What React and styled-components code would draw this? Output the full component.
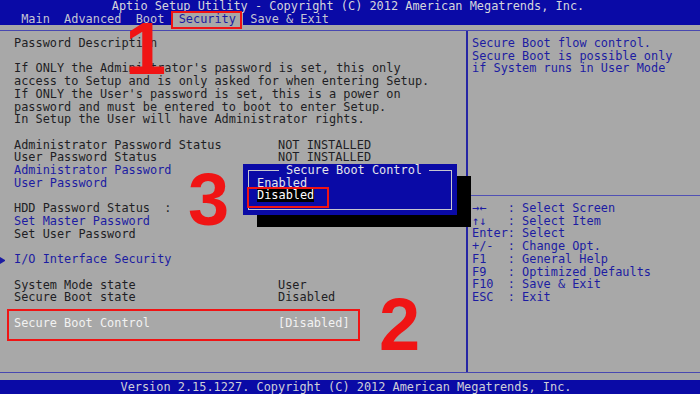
import React from 'react'
import styled, { createGlobalStyle } from 'styled-components'

const BLUE = '#0a0aa6'
const GREY = '#a8a8a8'
const INK = '#1e1e24'
const LINK = '#1c1ca2'
const RED = '#f01414'

const GlobalStyle = createGlobalStyle`
  html, body { margin: 0; padding: 0; background: ${GREY}; }
  * { box-sizing: border-box; }
`

const Screen = styled.div`
  position: relative;
  width: 700px;
  height: 394px;
  overflow: hidden;
  display: flex;
  flex-direction: column;
  background: ${GREY};
  font-family: "DejaVu Sans Mono", "Liberation Mono", monospace;
  font-size: 11.9px;
  line-height: 12.73px;
  color: ${INK};
  white-space: pre;
`

const TopBar = styled.div`
  background: ${BLUE};
  height: 25px;
  color: #d6d6dc;
`

const Title = styled.div`
  text-align: center;
  padding-right: 4px;
`

const Tabs = styled.div`
  display: flex;
  padding-left: 14px;
`

const Tab = styled.span`
  padding: 0 1ch;
  color: ${p => (p.$active ? LINK : '#c4c4d4')};
  background: ${p => (p.$active ? GREY : 'transparent')};
`

const Rule = styled.div`
  height: 6px;
  border-bottom: 1.5px solid #4848b0;
`

const Main = styled.div`
  flex: 1;
  display: flex;
  min-height: 0;
`

const LeftPanel = styled.div`
  width: 466px;
  padding: 6px 0 0 14px;
`

const Divider = styled.div`
  width: 2px;
  background: #2626a4;
`

const RightPanel = styled.div`
  flex: 1;
  display: flex;
  flex-direction: column;
`

const HelpBox = styled.div`
  height: 165px;
  padding: 6px 0 0 4px;
  color: ${LINK};
  border-bottom: 1.5px solid #5050b4;
`

const Legend = styled.div`
  padding: 6px 0 0 4px;
  color: ${LINK};
`

const KeyRow = styled.div`
  display: grid;
  grid-template-columns: 5ch 2ch auto;
`

const Line = styled.div`
  height: 12.73px;
  color: ${p => (p.$tone === 'blue' ? LINK : p.$tone === 'white' ? '#f2f2f2' : INK)};
`

const Row = styled(Line)`
  display: grid;
  grid-template-columns: 264px auto;
`

const SubRow = styled(Line)`
  display: flex;
  align-items: center;
  margin-left: -14px;
`

const Arrow = styled.span`
  width: 14px;
  height: 7px;
  display: inline-block;
  border-left: 5px solid ${LINK};
  border-top: 3.5px solid transparent;
  border-bottom: 3.5px solid transparent;
  margin-top: 1px;
`

const BottomRule = styled.div`
  height: 8px;
  border-top: 1.5px solid #4848b0;
`

const Footer = styled.div`
  height: 14px;
  background: ${BLUE};
  color: #cfcfd8;
  text-align: center;
  line-height: 14px;
  padding-right: 8px;
`

/* popup menu over the page */
const Dialog = styled.div`
  position: absolute;
  left: 243px;
  top: 164px;
  width: 214px;
  height: 51px;
  background: ${BLUE};
  box-shadow: 14px 12px 0 #000;
  padding: 0 5px 5px 5px;
  color: #e4e4ea;
  z-index: 2;
`

const Frame = styled.fieldset`
  margin: 0;
  height: 100%;
  min-inline-size: 0;
  padding: 0 0 6px 8px;
  border: 1px solid #c6c6d0;
  border-radius: 0;
`

const FrameTitle = styled.legend`
  margin: 0 auto;
  padding: 0 1ch;
  line-height: 12.73px;
`

const Option = styled.div`
  height: 12.73px;
`

const Highlight = styled.span`
  background: #000;
  color: #fff;
`

/* red annotations */
const Mark = styled.div`
  position: absolute;
  border: 2px solid ${RED};
  z-index: 3;
`

const Number = styled.div`
  position: absolute;
  font-family: "Liberation Sans", Arial, sans-serif;
  font-weight: 700;
  font-size: 74px;
  line-height: 1;
  color: ${RED};
  z-index: 3;
`

const description = [
  'Password Description',
  '',
  "If ONLY the Administrator's password is set, this only",
  'access to Setup and is only asked for when entering Setup.',
  "If ONLY the User's password is set, this is a power on",
  'password and must be entered to boot to enter Setup.',
  'In Setup the User will have Administrator rights.',
  '',
]

const keys = [
  ['\u2192\u2190', 'Select Screen'],
  ['\u2191\u2193', 'Select Item'],
  ['Enter', 'Select'],
  ['+/-', 'Change Opt.'],
  ['F1', 'General Help'],
  ['F9', 'Optimized Defaults'],
  ['F10', 'Save & Exit'],
  ['ESC', 'Exit'],
]

const tabs = ['Main', 'Advanced', 'Boot', 'Security', 'Save & Exit']

const App = () => {
  return (
    <>
      <GlobalStyle />
      <Screen>
        <TopBar>
          <Title>Aptio Setup Utility - Copyright (C) 2012 American Megatrends, Inc.</Title>
          <Tabs>
            {tabs.map(t => (
              <Tab key={t} $active={t === 'Security'}>{t}</Tab>
            ))}
          </Tabs>
        </TopBar>
        <Rule />
        <Main>
          <LeftPanel>
            {description.map((l, i) => (
              <Line key={i}>{l}</Line>
            ))}
            <Row><span>Administrator Password Status</span><span>NOT INSTALLED</span></Row>
            <Row><span>User Password Status</span><span>NOT INSTALLED</span></Row>
            <Line $tone="blue">Administrator Password</Line>
            <Line $tone="blue">User Password</Line>
            <Line />
            <Line>HDD Password Status  :</Line>
            <Line $tone="blue">Set Master Password</Line>
            <Line>Set User Password</Line>
            <Line />
            <SubRow $tone="blue"><Arrow />I/O Interface Security</SubRow>
            <Line />
            <Row><span>System Mode state</span><span>User</span></Row>
            <Row><span>Secure Boot state</span><span>Disabled</span></Row>
            <Line />
            <Row $tone="white"><span>Secure Boot Control</span><span>[Disabled]</span></Row>
          </LeftPanel>
          <Divider />
          <RightPanel>
            <HelpBox>
              <div>Secure Boot flow control.</div>
              <div>Secure Boot is possible only</div>
              <div>if System runs in User Mode</div>
            </HelpBox>
            <Legend>
              {keys.map(([k, d]) => (
                <KeyRow key={k}>
                  <span>{k}</span>
                  <span>:</span>
                  <span>{d}</span>
                </KeyRow>
              ))}
            </Legend>
          </RightPanel>
        </Main>
        <BottomRule />
        <Footer>Version 2.15.1227. Copyright (C) 2012 American Megatrends, Inc.</Footer>

        <Dialog>
          <Frame>
            <FrameTitle>Secure Boot Control</FrameTitle>
            <Option>Enabled</Option>
            <Option><Highlight>Disabled</Highlight></Option>
          </Frame>
        </Dialog>

        <Mark style={{ left: 171, top: 11, width: 71, height: 18 }} />
        <Mark style={{ left: 247, top: 187, width: 82, height: 21 }} />
        <Mark style={{ left: 7, top: 309, width: 353, height: 32 }} />
        <Number style={{ left: 125, top: 12 }}>1</Number>
        <Number style={{ left: 188, top: 163 }}>3</Number>
        <Number style={{ left: 379, top: 288 }}>2</Number>
      </Screen>
    </>
  )
}

export default App
